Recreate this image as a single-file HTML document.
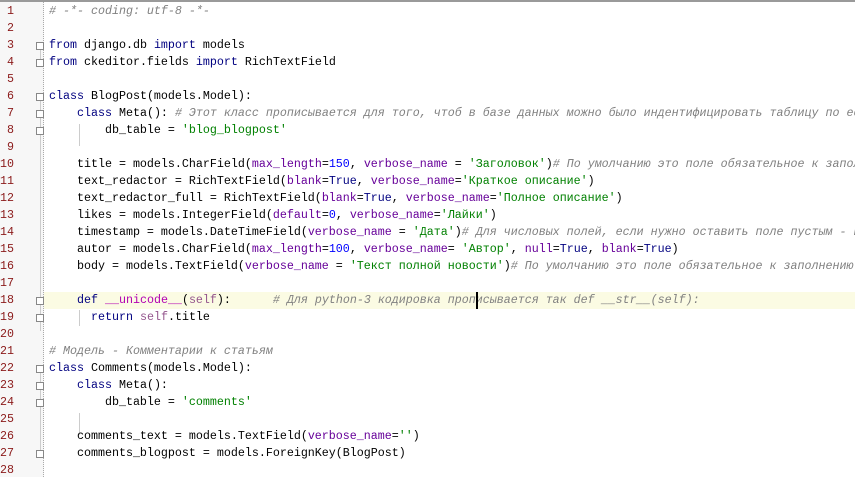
<!DOCTYPE html><html><head><meta charset="utf-8"><style>
body{margin:0;width:855px;height:477px;overflow:hidden;background:#fff;position:relative;font-family:"Liberation Mono",monospace;font-size:11.67px}
.top{position:absolute;left:0;top:0;width:855px;height:2px;background:#9a9a9a}
.gut{position:absolute;left:0;top:2px;width:43px;height:475px;background:#f7f7f7;border-right:1px dotted #aaa}
.ln{position:absolute;left:0;width:14px;text-align:right;color:#8b1a1a;line-height:17px}
.code{position:absolute;left:49px;width:806px;overflow:hidden;white-space:pre;line-height:17px;color:#000}
.hl{position:absolute;left:44px;width:811px;height:17px;background:#fbfbe3}
.k{color:#000080}.s{color:#008000}.n{color:#0000ff}.a{color:#660099}.c{color:#808080;font-style:italic}.sf{color:#94558d}
.f{position:absolute;left:36px;width:8px;height:8px;border:1px solid #888;background:#fff;box-sizing:border-box}
.vl{position:absolute;width:1px;background:#ccc}
</style></head><body>
<div class="top"></div><div class="gut"></div>
<div class="hl" style="top:292px"></div>
<div class="vl" style="left:40px;top:50px;height:12px"></div>
<div class="vl" style="left:40px;top:101px;height:230px"></div>
<div class="vl" style="left:40px;top:372px;height:86px"></div>
<div class="vl" style="left:79px;top:124px;height:22px"></div>
<div class="vl" style="left:79px;top:310px;height:16px"></div>
<div class="vl" style="left:79px;top:413px;height:22px"></div>
<div class="f" style="top:42px"></div><div class="f" style="top:59px"></div>
<div class="f" style="top:93px"></div><div class="f" style="top:110px"></div><div class="f" style="top:127px"></div>
<div class="f" style="top:297px"></div><div class="f" style="top:314px"></div>
<div class="f" style="top:365px"></div><div class="f" style="top:382px"></div><div class="f" style="top:399px"></div><div class="f" style="top:450px"></div>
<div class="ln" style="top:3px">1<br>2<br>3<br>4<br>5<br>6<br>7<br>8<br>9<br>10<br>11<br>12<br>13<br>14<br>15<br>16<br>17<br>18<br>19<br>20<br>21<br>22<br>23<br>24<br>25<br>26<br>27<br>28</div>
<div class="code" style="top:3px"><span class="c"># -*- coding: utf-8 -*-</span>

<span class="k">from</span> django.db <span class="k">import</span> models
<span class="k">from</span> ckeditor.fields <span class="k">import</span> RichTextField

<span class="k">class</span> BlogPost(models.Model):
    <span class="k">class</span> Meta(): <span class="c"># Этот класс прописывается для того, чтоб в базе данных можно было индентифицировать таблицу по ее имени</span>
        db_table = <span class="s">'blog_blogpost'</span>

    title = models.CharField(<span class="a">max_length</span>=<span class="n">150</span>, <span class="a">verbose_name</span> = <span class="s">'Заголовок'</span>)<span class="c"># По умолчанию это поле обязательное к заполнению</span>
    text_redactor = RichTextField(<span class="a">blank</span>=<span class="k">True</span>, <span class="a">verbose_name</span>=<span class="s">'Краткое описание'</span>)
    text_redactor_full = RichTextField(<span class="a">blank</span>=<span class="k">True</span>, <span class="a">verbose_name</span>=<span class="s">'Полное описание'</span>)
    likes = models.IntegerField(<span class="a">default</span>=<span class="n">0</span>, <span class="a">verbose_name</span>=<span class="s">'Лайки'</span>)
    timestamp = models.DateTimeField(<span class="a">verbose_name</span> = <span class="s">'Дата'</span>)<span class="c"># Для числовых полей, если нужно оставить поле пустым - null=True</span>
    autor = models.CharField(<span class="a">max_length</span>=<span class="n">100</span>, <span class="a">verbose_name</span>= <span class="s">'Автор'</span>, <span class="a">null</span>=<span class="k">True</span>, <span class="a">blank</span>=<span class="k">True</span>)
    body = models.TextField(<span class="a">verbose_name</span> = <span class="s">'Текст полной новости'</span>)<span class="c"># По умолчанию это поле обязательное к заполнению</span>

    <span class="k">def</span> <span style="color:#b200b2">__unicode__</span>(<span class="sf">self</span>):      <span class="c"># Для python-3 кодировка прописывается так def __str__(self):</span>
      <span class="k">return</span> <span class="sf">self</span>.title

<span class="c"># Модель - Комментарии к статьям</span>
<span class="k">class</span> Comments(models.Model):
    <span class="k">class</span> Meta():
        db_table = <span class="s">'comments'</span>

    comments_text = models.TextField(<span class="a">verbose_name</span>=<span class="s">''</span>)
    comments_blogpost = models.ForeignKey(BlogPost)
</div>
<div style="position:absolute;left:476px;top:292px;width:2px;height:17px;background:#000"></div>
</body></html>
